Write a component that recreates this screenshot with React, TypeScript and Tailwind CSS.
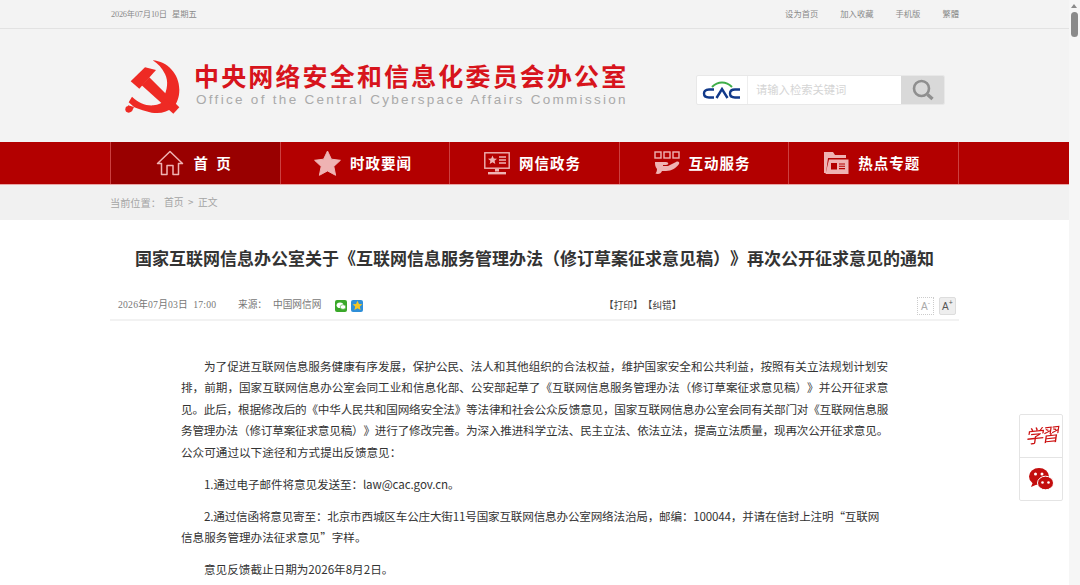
const sans = "font-['Noto_Sans_CJK_SC',sans-serif]";

function Emblem() {
  return (
    <svg width="90" height="75" viewBox="0 0 270 225" className="shrink-0">
      <g fill="#ee2a24">
        <path d="M62 100 L105 58 L138 66 L88 122 Z" />
        <path d="M95 112 L118 88 L208 178 L190 197 Z" />
        <path d="M128 37 C172 40 208 78 208 125 C208 148 201 165 190 178 L160 150 C172 125 176 100 165 78 C156 60 144 47 128 37 Z" />
        <path d="M168 154 L190 178 C172 193 150 198 125 194 C107 191 88 183 73 178 L56 163 L66 146 C85 164 108 174 130 172 C145 171 158 165 168 154 Z" />
        <circle cx="56" cy="184" r="10" />
        <path d="M54 172 L72 177 L66 190 L52 190 Z" />
      </g>
    </svg>
  );
}

function CacLogo() {
  return (
    <svg width="40" height="20" viewBox="0 0 40 20">
      <path d="M10 7 C16 1 24 1 30 7" fill="none" stroke="#3fae49" strokeWidth="2" />
      <g fill="none" stroke="#123a8a" strokeWidth="2.4">
        <path d="M12 9.5 H7 C3 9.5 2 11.5 2 13.5 C2 15.5 3 17.5 7 17.5 H12" />
        <path d="M14.5 18 L20 9 L25.5 18" />
        <path d="M38 9.5 H33 C29 9.5 28 11.5 28 13.5 C28 15.5 29 17.5 33 17.5 H38" />
      </g>
    </svg>
  );
}

const iconFill = "#efb3b3";

function HomeIcon() {
  return (
    <svg width="28" height="26" viewBox="0 0 28 26" fill="none" stroke={iconFill} strokeWidth="1.5">
      <path d="M1.5 13.5 L14 1.5 L26.5 13.5 L22.5 13.5 L22.5 24.5 L17 24.5 L17 15.5 L11 15.5 L11 24.5 L5.5 24.5 L5.5 13.5 Z" strokeLinejoin="round" />
    </svg>
  );
}
function StarIcon() {
  return (
    <svg width="27" height="26" viewBox="0 0 27 26">
      <path d="M13.5 1 L17.4 9.2 L26.4 10.3 L19.8 16.4 L21.6 25.3 L13.5 20.9 L5.4 25.3 L7.2 16.4 L0.6 10.3 L9.6 9.2 Z" fill={iconFill} stroke={iconFill} strokeLinejoin="round" />
    </svg>
  );
}
function ScreenIcon() {
  return (
    <svg width="26" height="23" viewBox="0 0 26 23" fill="none">
      <rect x="0.8" y="0.8" width="24.4" height="15.4" stroke={iconFill} strokeWidth="1.4" />
      <path d="M8.5 3.5 L9.8 6.4 L13 6.7 L10.6 8.8 L11.3 11.9 L8.5 10.3 L5.7 11.9 L6.4 8.8 L4 6.7 L7.2 6.4 Z" fill={iconFill} />
      <path d="M15 5 H22 M15 8 H22 M15 11 H22" stroke={iconFill} strokeWidth="1.4" />
      <path d="M11 17 H15 V19.5 H11 Z" fill={iconFill} />
      <rect x="4" y="20" width="18" height="2.4" fill={iconFill} />
    </svg>
  );
}
function HandIcon() {
  return (
    <svg width="26" height="24" viewBox="0 0 26 24" fill="none">
      <rect x="1" y="1" width="6" height="6" stroke={iconFill} strokeWidth="1.4" />
      <rect x="10" y="1" width="6" height="6" stroke={iconFill} strokeWidth="1.4" />
      <rect x="19" y="1" width="6" height="6" stroke={iconFill} strokeWidth="1.4" />
      <path d="M1 11 H12 C15 11 15 14 12 14 H9 V15 H14 L22 11 C24 10 26 11 25 13 C22 17 18 20 12 20 L8 20 C7 23 4 23.5 1.5 22.5 C2.5 21 3 20 3 18 C1 16 1 13 1 11 Z" fill={iconFill} />
    </svg>
  );
}
function FolderIcon() {
  return (
    <svg width="26" height="24" viewBox="0 0 26 24">
      <path d="M1 1 H10 L12 4 H23 V7 H5 L3 22 H1 Z" fill={iconFill} />
      <path d="M6 8.5 H25.5 V23 H2.5 Z" fill={iconFill} />
      <rect x="8" y="12" width="6" height="6.5" fill="#b30000" />
      <path d="M16 13 H22 M16 15.3 H22 M16 17.6 H22" stroke="#b30000" strokeWidth="1.1" />
    </svg>
  );
}

const navItems = [
  { icon: <HomeIcon />, label: "首 页", active: true },
  { icon: <StarIcon />, label: "时政要闻" },
  { icon: <ScreenIcon />, label: "网信政务" },
  { icon: <HandIcon />, label: "互动服务" },
  { icon: <FolderIcon />, label: "热点专题" },
];

function Wrap({ children, className = "" }: { children: React.ReactNode; className?: string }) {
  return <div className={`mx-auto w-[849px] ${className}`}>{children}</div>;
}

export default function App() {
  return (
    <div className={`flex h-[585px] w-[1080px] overflow-hidden bg-white [text-spacing-trim:space-all] ${sans}`}>
      <div className="w-[1069px] shrink-0">
        <div className="h-[29px] border-b border-[#e2e2e2] bg-[#f3f3f3]">
          <Wrap className="flex h-[28px] items-center justify-between pt-[2px] font-['Liberation_Serif','Noto_Sans_CJK_SC',serif] text-[8.3px] text-[#8a8a8a]">
            <div className="flex gap-[5px] pl-px">
              <span className="tracking-[-0.2px]">2026年07月10日</span>
              <span>星期五</span>
            </div>
            <div className="flex gap-[22px]">
              <span>设为首页</span>
              <span>加入收藏</span>
              <span>手机版</span>
              <span>繁體</span>
            </div>
          </Wrap>
        </div>

        <div className="h-[113px] bg-[#f3f3f3]">
          <Wrap className="flex h-full items-center justify-between pr-[14px]">
            <div className="flex items-center">
              <div className="-mr-[6px] flex">
                <Emblem />
              </div>
              <div className="flex flex-col pb-[3px]">
                <div className="whitespace-nowrap text-[25px] font-bold leading-[30px] tracking-[2.15px] text-[#d7141c]">中央网络安全和信息化委员会办公室</div>
                <div className="mt-[2px] whitespace-nowrap pl-[2px] font-['Liberation_Sans',sans-serif] text-[13.5px] leading-[16px] tracking-[2.3px] text-[#aaaaaa]">Office of the Central Cyberspace Affairs Commission</div>
              </div>
            </div>
            <div className="mt-[8px] flex h-[30px] w-[249px] overflow-hidden rounded-[2px] border border-[#e8e8e8] bg-white">
              <div className="flex w-[51px] shrink-0 items-center justify-center border-r border-[#eeeeee]">
                <CacLogo />
              </div>
              <div className="flex flex-1 items-center pl-[8px] text-[11.3px] text-[#d5d5d5]">请输入检索关键词</div>
              <div className="flex w-[43px] shrink-0 items-center justify-center bg-[#d9d9d9]">
                <svg width="24" height="24" viewBox="0 0 24 24" fill="none">
                  <circle cx="10.5" cy="10.5" r="7.5" stroke="#8f8f8f" strokeWidth="2.6" />
                  <path d="M16.5 16.5 L21.5 21" stroke="#8f8f8f" strokeWidth="3.4" />
                </svg>
              </div>
            </div>
          </Wrap>
        </div>

        <div className="h-[43px] border-b border-[#e9a5a5] bg-[#b30000]">
          <Wrap className="grid h-[42px] grid-cols-5 border-l border-[#cc4040]">
            {navItems.map((n) => (
              <div
                key={n.label}
                className={`flex items-center justify-center gap-[9px] border-r border-[#cc4040] pr-[4px] ${n.active ? "bg-[#990000] pl-[3px]" : ""}`}
              >
                {n.icon}
                <span className={`whitespace-pre text-[14.5px] font-bold text-white ${n.active ? "tracking-[2.5px]" : "tracking-[1px]"}`}>{n.label}</span>
              </div>
            ))}
          </Wrap>
        </div>

        <div className="h-[35px] bg-[#f1f1f1]">
          <Wrap className="flex h-full items-center text-[9.8px] text-[#a5a5a5]">
            <span className="w-[54px] text-[10.2px]">当前位置：</span>
            <span>首页</span>
            <span className="mx-[4.5px]">&gt;</span>
            <span>正文</span>
          </Wrap>
        </div>

        <Wrap>
          <h1 className="pt-[25px] text-center text-[17px] font-bold leading-[26px] text-[#333333]">
            国家互联网信息办公室关于《互联网信息服务管理办法（修订草案征求意见稿）》再次公开征求意见的通知
          </h1>
          <div className="relative mt-[19px] flex h-[31px] items-center border-b-2 border-[#f2f2f2] pt-[2px] font-['Liberation_Serif','Noto_Sans_CJK_SC',serif] text-[9.7px] text-[#777777]">
            <span className="ml-[8px] w-[120px] tracking-[0.2px]">2026年07月03日&nbsp; 17:00</span>
            <span className="w-[35px]">来源：</span>
            <span>中国网信网</span>
            <span className="ml-[14px] flex gap-[4px]">
              <span className="flex h-[12px] w-[12px] items-center justify-center rounded-[2px] bg-[#3aa829]">
                <svg width="10" height="8" viewBox="0 0 10 8" fill="#fff">
                  <ellipse cx="4" cy="3.2" rx="3.4" ry="2.8" />
                  <ellipse cx="7" cy="5" rx="2.8" ry="2.3" stroke="#3aa829" strokeWidth="0.6" />
                </svg>
              </span>
              <span className="flex h-[12px] w-[12px] items-center justify-center rounded-[2px] bg-[#2f8fd8]">
                <svg width="11" height="11" viewBox="0 0 11 11" fill="#f6c623">
                  <path d="M5.5 0.8 L7 4 L10.4 4.3 L7.8 6.5 L8.6 10 L5.5 8.2 L2.4 10 L3.2 6.5 L0.6 4.3 L4 4 Z" />
                </svg>
              </span>
            </span>
            <div className="absolute left-[494px] top-[9px] whitespace-nowrap text-[#444444]">【打印】【纠错】</div>
            <div className="absolute right-[3px] top-[7px] flex gap-[5px] font-['Liberation_Sans',sans-serif]">
              <span className="flex h-[18px] w-[17px] items-center justify-center border border-dotted border-[#cccccc] text-[10px] text-[#aaaaaa]">
                A<sup className="text-[7px]">-</sup>
              </span>
              <span className="flex h-[18px] w-[17px] items-center justify-center rounded-[2px] border border-[#dddddd] bg-[#eeeeee] text-[10px] text-[#555555]">
                A<sup className="text-[7px]">+</sup>
              </span>
            </div>
          </div>

          <div className="ml-[71px] w-[708px] pt-[35px] text-[11.6px] leading-[21.4px] text-[#333333]">
            <p className="indent-[23px] whitespace-nowrap">
              为了促进互联网信息服务健康有序发展，保护公民、法人和其他组织的合法权益，维护国家安全和公共利益，按照有关立法规划计划安<br />
              排，前期，国家互联网信息办公室会同工业和信息化部、公安部起草了《互联网信息服务管理办法（修订草案征求意见稿）》并公开征求意<br />
              <span className="tracking-[-0.19px]">见。此后，根据修改后的《中华人民共和国网络安全法》等法律和社会公众反馈意见，国家互联网信息办公室会同有关部门对《互联网信息服</span><br />
              <span className="tracking-[-0.19px]">务管理办法（修订草案征求意见稿）》进行了修改完善。为深入推进科学立法、民主立法、依法立法，提高立法质量，现再次公开征求意见。</span><br />
              公众可通过以下途径和方式提出反馈意见：
            </p>
            <p className="mt-[10.7px] indent-[23px]"><span className="tracking-[-0.1px]">1.通过电子邮件将意见发送至：law@cac.gov.cn。</span></p>
            <p className="mt-[10.7px] indent-[23px] whitespace-nowrap">
              <span className="tracking-[-0.19px]">2.通过信函将意见寄至：北京市西城区车公庄大街11号国家互联网信息办公室网络法治局，邮编：100044，并请在信封上注明“互联网</span><br />
              信息服务管理办法征求意见”字样。
            </p>
            <p className="mt-[10.7px] indent-[23px]">意见反馈截止日期为2026年8月2日。</p>
          </div>
        </Wrap>
      </div>

      <div className="relative w-[11px] shrink-0 bg-[#f6f6f6]">
        <div className="absolute left-[2px] top-[12px] h-[25px] w-[7px] rounded-[4px] bg-[#8a8a8a]" />
        <div className="absolute left-[2px] top-[4px] h-0 w-0 border-x-[3.5px] border-b-[4px] border-x-transparent border-b-[#8a8a8a]" />
      </div>

      <div className="fixed left-[1019px] top-[414px] flex w-[44px] flex-col rounded-[2px] border border-[#e4e4e4] bg-white">
        <div className="flex h-[43px] items-center justify-center border-b border-[#e4e4e4]">
          <span className="-rotate-6 whitespace-nowrap font-['Liberation_Serif','Noto_Sans_CJK_SC',serif] text-[18px] italic tracking-[-2px] text-[#cc1111]">学習</span>
        </div>
        <div className="flex h-[42px] items-center justify-center">
          <svg width="26" height="24" viewBox="0 0 26 24" fill="#c30d0d">
            <ellipse cx="11" cy="9.5" rx="10" ry="8.5" />
            <path d="M5 15 L3 20 L10 17 Z" />
            <ellipse cx="17.5" cy="16" rx="8" ry="6.8" stroke="#fff" strokeWidth="1" />
            <circle cx="7.5" cy="7" r="1.5" fill="#fff" />
            <circle cx="14" cy="7" r="1.5" fill="#fff" />
            <circle cx="14.5" cy="15.5" r="1.3" fill="#fff" />
            <circle cx="20.5" cy="15.5" r="1.3" fill="#fff" />
          </svg>
        </div>
      </div>
    </div>
  );
}
